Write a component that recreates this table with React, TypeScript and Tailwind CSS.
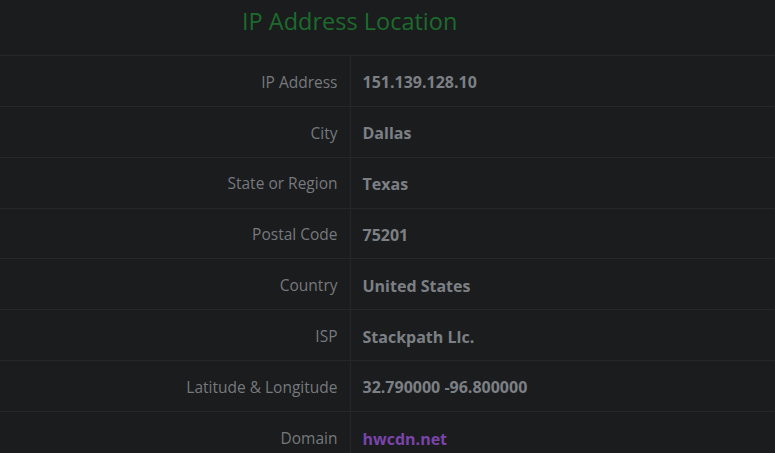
const rows: { label: string; value: string; link?: boolean }[] = [
  { label: "IP Address", value: "151.139.128.10" },
  { label: "City", value: "Dallas" },
  { label: "State or Region", value: "Texas" },
  { label: "Postal Code", value: "75201" },
  { label: "Country", value: "United States" },
  { label: "ISP", value: "Stackpath Llc." },
  { label: "Latitude & Longitude", value: "32.790000 -96.800000" },
  { label: "Domain", value: "hwcdn.net", link: true },
];

export default function App() {
  return (
    <div
      className="min-h-screen w-full bg-[#1b1c1e] overflow-hidden"
      style={{ fontFamily: '"Open Sans", "Noto Sans", sans-serif' }}
    >
      <h1 className="h-[55px] pl-[242px] pt-[5px] text-[23.5px] leading-[32px] text-[#1c6b2c]">
        IP Address Location
      </h1>
      <table className="w-full border-collapse">
        <tbody>
          {rows.map((row) => (
            <tr key={row.label} className="h-[50.85px] border-t border-[#26272a]">
              <td className="w-[350px] border-r border-[#26272a] pr-3 pt-[3px] text-right text-[15.5px] text-[#76797d]">
                {row.label}
              </td>
              <td
                className={
                  "pl-3 pt-[3px] text-[16px] font-bold " +
                  (row.link ? "text-[#7a44ab]" : "text-[#7c8085]")
                }
              >
                {row.value}
              </td>
            </tr>
          ))}
        </tbody>
      </table>
    </div>
  );
}
